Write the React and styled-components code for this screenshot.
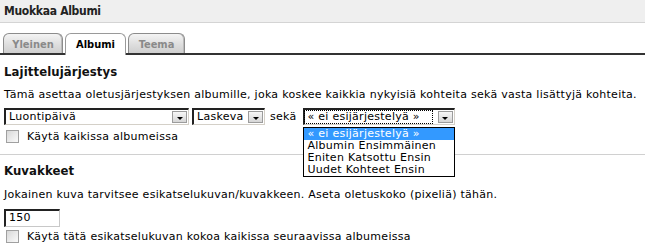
import React from "react";
import styled, { createGlobalStyle } from "styled-components";

const Global = createGlobalStyle`
  html, body { margin: 0; padding: 0; background: #fff; }
  body { font-family: "DejaVu Sans", Verdana, sans-serif; font-size: 11px; color: #000; }
`;

const Page = styled.div`
  width: 645px;
  height: 252px;
  overflow: hidden;
  background: #fff;
  letter-spacing: 0.27px;
`;

const TitleBar = styled.div`
  height: 22px;
  background: #efefef;
  border-bottom: 1px solid #d4d4d4;
  padding-left: 4px;
  display: flex;
  align-items: center;
  font-family: "DejaVu Sans Condensed", "DejaVu Sans", sans-serif;
  font-weight: bold;
  font-size: 12px;
  letter-spacing: -0.3px;
  color: #222;
`;

const TabBar = styled.div`
  margin-top: 10px;
  display: flex;
  align-items: flex-end;
  gap: 2px;
  padding-left: 3px;
  height: 20px;
  border-bottom: 2px solid #333;
`;

const Tab = styled.div`
  width: ${(p) => p.$w}px;
  height: ${(p) => (p.$active ? 22 : 20)}px;
  margin-bottom: ${(p) => (p.$active ? -2 : 0)}px;
  box-sizing: border-box;
  border: 1px solid ${(p) => (p.$active ? "#9a9a9a" : "#8c8c8c")};
  border-bottom: none;
  border-radius: 6px 6px 0 0;
  background: ${(p) =>
    p.$active ? "#fff" : "linear-gradient(#f4f4f4, #dcdcdc 60%, #cfcfcf)"};
  display: flex;
  justify-content: center;
  padding-top: 4px;
  font-family: "DejaVu Sans Condensed", "DejaVu Sans", sans-serif;
  font-weight: bold;
  font-size: 11px;
  letter-spacing: 0;
  color: ${(p) => (p.$active ? "#000" : "#8a8a8a")};
  box-shadow: ${(p) => (p.$active ? "none" : "inset -1px 0 0 #bbb")};
`;

const Section = styled.div`
  padding: 0 4px;
`;

const Heading = styled.div`
  font-family: "DejaVu Sans Condensed", "DejaVu Sans", sans-serif;
  font-weight: bold;
  font-size: 13px;
  line-height: 16px;
  letter-spacing: 0.1px;
  margin-top: ${(p) => p.$top}px;
  color: #111;
`;

const Para = styled.div`
  font-size: 11px;
  line-height: 14px;
  margin-top: ${(p) => p.$top}px;
`;

const Row = styled.div`
  display: flex;
  align-items: center;
  margin-top: ${(p) => p.$top}px;
`;

const SelectWrap = styled.div`
  position: relative;
  width: ${(p) => p.$w}px;
  height: 17px;
  box-sizing: border-box;
  border-top: 2px solid #222;
  border-left: 2px solid #222;
  border-right: 1px solid #d4d0c8;
  border-bottom: 1px solid #d4d0c8;
  background: #fff;
  display: flex;
  align-items: center;
  margin-right: ${(p) => p.$mr || 0}px;
`;

const SelectText = styled.div`
  flex: 1;
  height: 12px;
  line-height: 12px;
  padding-left: 3px;
  font-size: 11px;
  white-space: nowrap;
  outline: ${(p) => (p.$focus ? "1px dotted #000" : "none")};
  margin-right: ${(p) => (p.$focus ? 6 : 0)}px;
`;

const ArrowBtn = styled.div`
  width: 15px;
  height: 12px;
  margin-right: 1px;
  box-sizing: border-box;
  border: 1px solid #9c9c9c;
  background: linear-gradient(#f7f7f7, #d6d6d6);
  display: flex;
  align-items: center;
  justify-content: center;
`;

const Tri = styled.div`
  width: 0;
  height: 0;
  margin-top: 2px;
  border-left: 3px solid transparent;
  border-right: 3px solid transparent;
  border-top: 3px solid #000;
`;

const Word = styled.span`
  font-size: 11px;
  margin: 0 6px 0 5px;
`;

const DropList = styled.div`
  position: absolute;
  left: -2px;
  top: 17px;
  width: 152px;
  box-sizing: border-box;
  border: 1px solid #000;
  background: #fff;
  z-index: 5;
`;

const DropItem = styled.div`
  height: 12px;
  line-height: 12px;
  padding-left: 4px;
  font-size: 11px;
  white-space: nowrap;
  background: ${(p) => (p.$sel ? "#3399ff" : "#fff")};
  color: ${(p) => (p.$sel ? "#fff" : "#000")};
`;

const CheckRow = styled.label`
  display: flex;
  align-items: center;
  margin-top: ${(p) => p.$top}px;
  padding-left: 2px;
  font-size: 11px;
`;

const Box = styled.span`
  width: 13px;
  height: 13px;
  box-sizing: border-box;
  border: 1px solid #a0a0a0;
  background: linear-gradient(135deg, #d8d8d8, #fafafa);
  margin-right: 8px;
`;

const Separator = styled.div`
  height: 1px;
  background: #d0d0d0;
  margin-top: ${(p) => p.$top}px;
`;

const TextInput = styled.div`
  width: 56px;
  height: 18px;
  box-sizing: border-box;
  border-top: 2px solid #222;
  border-left: 2px solid #222;
  border-right: 1px solid #c8c8c8;
  border-bottom: 1px solid #c8c8c8;
  padding-left: 3px;
  line-height: 14px;
  font-size: 11px;
  margin-top: ${(p) => p.$top}px;
`;

function Select({ w, value, mr, focus, children }) {
  return (
    <SelectWrap $w={w} $mr={mr}>
      <SelectText $focus={focus}>{value}</SelectText>
      <ArrowBtn>
        <Tri />
      </ArrowBtn>
      {children}
    </SelectWrap>
  );
}

export default function App() {
  return (
    <Page>
      <Global />
      <TitleBar>Muokkaa Albumi</TitleBar>
      <TabBar>
        <Tab $w={60}>Yleinen</Tab>
        <Tab $w={61} $active>Albumi</Tab>
        <Tab $w={57}>Teema</Tab>
      </TabBar>
      <Section>
        <Heading $top={9}>Lajittelujärjestys</Heading>
        <Para $top={8}>
          Tämä asettaa oletusjärjestyksen albumille, joka koskee kaikkia nykyisiä kohteita sekä vasta lisättyjä kohteita.
        </Para>
        <Row $top={6}>
          <Select w={185} mr={3} value="Luontipäivä" />
          <Select w={73} value="Laskeva" />
          <Word>sekä</Word>
          <Select w={152} value="« ei esijärjestelyä »" focus>
            <DropList>
              <DropItem $sel>« ei esijärjestelyä »</DropItem>
              <DropItem>Albumin Ensimmäinen</DropItem>
              <DropItem>Eniten Katsottu Ensin</DropItem>
              <DropItem>Uudet Kohteet Ensin</DropItem>
            </DropList>
          </Select>
        </Row>
        <CheckRow $top={5}>
          <Box />
          Käytä kaikissa albumeissa
        </CheckRow>
      </Section>
      <Separator $top={11} />
      <Section>
        <Heading $top={8}>Kuvakkeet</Heading>
        <Para $top={9}>
          Jokainen kuva tarvitsee esikatselukuvan/kuvakkeen. Aseta oletuskoko (pixeliä) tähän.
        </Para>
        <TextInput $top={7}>150</TextInput>
        <CheckRow $top={3}>
          <Box />
          Käytä tätä esikatselukuvan kokoa kaikissa seuraavissa albumeissa
        </CheckRow>
      </Section>
    </Page>
  );
}
